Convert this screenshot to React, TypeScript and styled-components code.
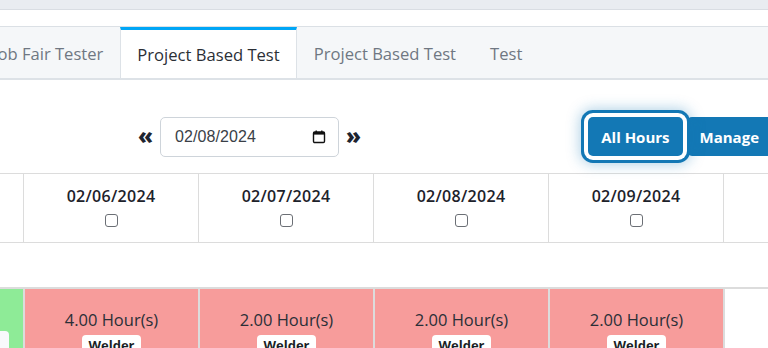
import React from "react";
import styled, { createGlobalStyle } from "styled-components";

const Global = createGlobalStyle`
  html, body { margin: 0; padding: 0; background: #fff; overflow: hidden; }
  body { font-family: "Open Sans", "Liberation Sans", sans-serif; color: #212529; }
  * { box-sizing: border-box; }
`;

const Page = styled.div`
  width: 768px;
  height: 348px;
  overflow: hidden;
  display: flex;
  flex-direction: column;
`;

const TopBar = styled.div`
  height: 10px;
  background: #e9ecf1;
  border-bottom: 1px solid #d9dde3;
  flex: none;
`;

const Spacer = styled.div`
  height: 17px;
  border-bottom: 1px solid #dbe0e5;
  flex: none;
`;

const TabStrip = styled.div`
  height: 53px;
  flex: none;
  background: #f5f7f9;
  border-bottom: 2px solid #dde2e7;
  display: flex;
  overflow: hidden;
`;

const Tab = styled.div<{ $active?: boolean; $shift?: number }>`
  flex: none;
  display: flex;
  align-items: center;
  padding: 0 16px 1px;
  margin-left: ${(p) => (p.$shift ? `${p.$shift}px` : "0")};
  font-size: 16.6px;
  font-weight: 500;
  color: ${(p) => (p.$active ? "#2b2f36" : "#6f7782")};
  background: ${(p) => (p.$active ? "#fff" : "transparent")};
  border-top: 3px solid ${(p) => (p.$active ? "#00a6f6" : "transparent")};
  border-left: 1px solid ${(p) => (p.$active ? "#dde2e7" : "transparent")};
  border-right: 1px solid ${(p) => (p.$active ? "#dde2e7" : "transparent")};
  margin-bottom: ${(p) => (p.$active ? "-2px" : "0")};
  white-space: nowrap;
`;

const Toolbar = styled.div`
  height: 93px;
  flex: none;
  display: flex;
  align-items: center;
  padding-top: 20px;
`;

const DateNav = styled.div`
  display: flex;
  align-items: center;
  gap: 7px;
  margin-left: 138px;
`;

const Arrow = styled.span`
  font-size: 22px;
  font-weight: 800;
  color: #1e2430;
  line-height: 1;
  padding-bottom: 3px;
`;

const DateBox = styled.div`
  width: 179px;
  height: 40px;
  border: 1px solid #ced4da;
  border-radius: 5px;
  display: flex;
  align-items: center;
  justify-content: space-between;
  padding: 0 12px 0 14px;
  font-family: "Liberation Sans", sans-serif;
  font-size: 16px;
  color: #3a3f47;
  letter-spacing: 0.1px;
`;

const BtnGroup = styled.div`
  margin-left: auto;
  display: flex;
  margin-right: -4px;
`;

const Btn = styled.button<{ $focus?: boolean }>`
  height: 39px;
  border: none;
  background: #1378b5;
  color: #fff;
  font-family: "Open Sans", sans-serif;
  font-weight: 700;
  font-size: 15px;
  padding: 0 13px;
  border-radius: ${(p) => (p.$focus ? "5px" : "5px 0 0 5px")};
  box-shadow: ${(p) =>
    p.$focus
      ? "0 0 0 4px #fff, 0 0 0 7px #1378b5, 0 0 14px 8px rgba(19,120,181,0.35)"
      : "none"};
  position: relative;
  z-index: ${(p) => (p.$focus ? 1 : 0)};
  margin-left: ${(p) => (p.$focus ? "0" : "4px")};
`;

const Table = styled.div`
  display: grid;
  grid-template-columns: 23px repeat(5, 175px);
  border-top: 1px solid #dcdcdc;
  flex: none;
`;

const HeadCell = styled.div<{ $first?: boolean }>`
  height: 69px;
  border-left: ${(p) => (p.$first ? "none" : "1px solid #dcdcdc")};
  border-bottom: 1px solid #dcdcdc;
  display: flex;
  flex-direction: column;
  align-items: center;
  padding-top: 11px;
  gap: 7px;
  font-weight: 600;
  font-size: 16px;
  letter-spacing: 0.3px;
  color: #1d222b;
`;

const Check = styled.span`
  width: 13px;
  height: 13px;
  border: 1px solid #6b6f75;
  border-radius: 3px;
  display: block;
`;

const BlankRow = styled.div`
  grid-column: 1 / -1;
  height: 46px;
  border-bottom: 2px solid #dcdcdc;
`;

const BodyCell = styled.div<{ $tone: "green" | "red" | "none" }>`
  height: 70px;
  background: ${(p) =>
    p.$tone === "green" ? "#8eeb97" : p.$tone === "red" ? "#f79c9b" : "#fff"};
  border-left: ${(p) => (p.$tone === "green" ? "none" : "2px solid #dcdcdc")};
  display: flex;
  flex-direction: column;
  align-items: center;
  padding-top: 19px;
  font-size: 16.5px;
  color: #2a2f37;
  position: relative;
`;

const Badge = styled.span`
  margin-top: 4px;
  background: #fff;
  border-radius: 4px;
  padding: 1px 6px 6px;
  font-weight: 700;
  font-size: 13px;
  color: #1b1f26;
`;

const EdgeBadge = styled.span`
  position: absolute;
  left: 0;
  top: 42px;
  width: 9px;
  height: 30px;
  background: #f8f9fb;
  border-radius: 0 4px 0 0;
`;

const dates = ["02/06/2024", "02/07/2024", "02/08/2024", "02/09/2024"];
const hours = ["4.00", "2.00", "2.00", "2.00"];

const CalIcon = () => (
  <svg width="14" height="14" viewBox="0 0 14 14">
    <rect x="1.5" y="2" width="11" height="10.5" rx="1.2" fill="none" stroke="#111" strokeWidth="1.4" />
    <rect x="1.5" y="2" width="11" height="2.6" fill="#111" />
    <rect x="3.5" y="0.5" width="1.4" height="2.5" fill="#111" />
    <rect x="9.1" y="0.5" width="1.4" height="2.5" fill="#111" />
  </svg>
);

export default function App() {
  return (
    <Page>
      <Global />
      <TopBar />
      <Spacer />
      <TabStrip>
        <Tab $shift={-24}>Job Fair Tester</Tab>
        <Tab $active>Project Based Test</Tab>
        <Tab>Project Based Test</Tab>
        <Tab>Test</Tab>
      </TabStrip>
      <Toolbar>
        <DateNav>
          <Arrow>«</Arrow>
          <DateBox>
            <span>02/08/2024</span>
            <CalIcon />
          </DateBox>
          <Arrow>»</Arrow>
        </DateNav>
        <BtnGroup>
          <Btn $focus>All Hours</Btn>
          <Btn>Manage</Btn>
        </BtnGroup>
      </Toolbar>
      <Table>
        <HeadCell $first />
        {dates.map((d) => (
          <HeadCell key={d}>
            {d}
            <Check />
          </HeadCell>
        ))}
        <HeadCell />
        <BlankRow />
        <BodyCell $tone="green">
          <EdgeBadge />
        </BodyCell>
        {hours.map((h, i) => (
          <BodyCell key={i} $tone="red">
            {h} Hour(s)
            <Badge>Welder</Badge>
          </BodyCell>
        ))}
        <BodyCell $tone="none" />
      </Table>
    </Page>
  );
}
